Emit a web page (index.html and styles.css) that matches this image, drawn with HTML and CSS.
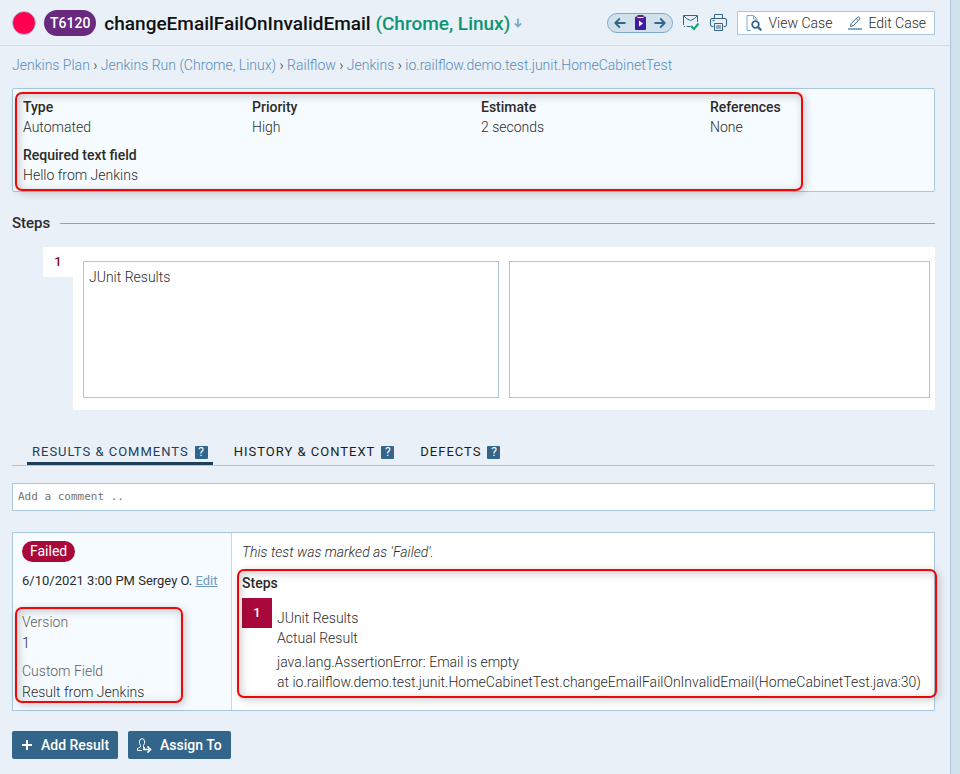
FILE: index.html
```html
<!DOCTYPE html>
<html lang="en">
<head>
<meta charset="utf-8">
<title>T6120 changeEmailFailOnInvalidEmail</title>
<link rel="stylesheet" href="styles.css">
</head>
<body>
<div class="page">
  <header class="header">
    <span class="status-dot"></span>
    <span class="test-id">T6120</span>
    <h1 class="title">changeEmailFailOnInvalidEmail <span class="title-config">(Chrome, Linux)</span></h1>
    <a class="title-arrow" href="#details" aria-label="Jump to details">
      <svg width="8" height="10" viewBox="0 0 8 10"><path d="M4 0.5V8.5M0.8 5.3L4 8.5L7.2 5.3" fill="none" stroke="#7fabcb" stroke-width="1.8"/></svg>
    </a>
    <div class="header-tools">
      <nav class="pager" aria-label="Tests">
        <a href="#prev" aria-label="Previous test"><svg width="12" height="12" viewBox="0 0 12 12"><path d="M11.5 6H1.5M5.8 1.5L1.3 6L5.8 10.5" fill="none" stroke="#33658a" stroke-width="1.8"/></svg></a>
        <a href="#run" aria-label="Run"><svg width="11" height="15" viewBox="0 0 11 15"><path d="M1 1.8H10A1 1 0 0 1 11 2.8V14A1 1 0 0 1 10 15H1A1 1 0 0 1 0 14V2.8A1 1 0 0 1 1 1.8Z" fill="#3d1d9e"/><path d="M0 5V2.8A1 1 0 0 1 1 1.8H2.5V0H8.5V1.8H10A1 1 0 0 1 11 2.8V5Z" fill="#5a2185"/><path d="M2.5 2.5H8.5" stroke="#e9f0f7"/><path d="M4 5.5L8 8.5L4 11.500Z" fill="#fff"/></svg></a>
        <a href="#next" aria-label="Next test"><svg width="12" height="12" viewBox="0 0 12 12"><path d="M0.500 6H10.500M6.200 1.500L10.700 6L6.200 10.500" fill="none" stroke="#33658a" stroke-width="1.8"/></svg></a>
      </nav>
      <a class="tool" href="#subscribe" aria-label="Subscribe"><svg width="17" height="17" viewBox="0 0 17 17"><path d="M7.500 12.500H3.500M0.500 11V1.500H14.500V8M1 12.500H2M1 2L3.500 4.500L7.500 6.500L11.500 4.500L14 2" fill="none" stroke="#33658a"/><path d="M8 12L11 15L15.500 9.500" fill="none" stroke="#12a178" stroke-width="2"/></svg></a>
      <a class="tool" href="#print" aria-label="Print"><svg width="17" height="17" viewBox="0 0 17 17"><path d="M4.500 4V0.500H12.500V4M3.500 12.500H2A1.500 1.500 0 0 1 0.500 11V6A1.500 1.500 0 0 1 2 4.500H15A1.500 1.500 0 0 1 16.500 6V11A1.500 1.500 0 0 1 15 12.500H13.500M4.500 9.500H12.500V16.500H4.500ZM6 12H11M6 14H11" fill="none" stroke="#33658a"/><path d="M2.500 6.500H4.500" stroke="#12a178" stroke-width="1.500"/></svg></a>
      <div class="case-links">
        <a href="#view"><svg width="16" height="16" viewBox="0 0 16 16"><path d="M5 15.500H1V0.500H7.500L11 4V5" fill="none" stroke="#7fabcb"/><path d="M7.500 0.500V4H11" fill="none" stroke="#7fabcb"/><circle cx="9.500" cy="9.500" r="3.300" fill="none" stroke="#33658a" stroke-width="1.800"/><path d="M12 12L15.300 15.300" stroke="#33658a" stroke-width="2.200"/></svg>View Case</a>
        <a href="#edit"><svg width="14" height="14" viewBox="0 0 14 14"><path d="M2.500 10.500L3.200 7.500L9.500 1.200Q10.300 0.500 11.300 1.500Q12.300 2.500 11.500 3.400L5.300 9.700ZM8.300 2.500L10.300 4.600" fill="none" stroke="#33658a"/><path d="M0 13H14" stroke="#7fabcb" stroke-width="2"/></svg>Edit Case</a>
      </div>
    </div>
  </header>

  <main class="content">
    <nav class="breadcrumb" aria-label="Breadcrumb">
      <a href="#plan">Jenkins Plan</a> › <a href="#jrun">Jenkins Run (Chrome, Linux)</a> › <a href="#railflow">Railflow</a> › <a href="#jenkins">Jenkins</a> › <a href="#suite">io.railflow.demo.test.junit.HomeCabinetTest</a>
    </nav>

    <section class="details" id="details">
      <dl class="fields">
        <div><dt>Type</dt><dd>Automated</dd></div>
        <div><dt>Priority</dt><dd>High</dd></div>
        <div><dt>Estimate</dt><dd>2 seconds</dd></div>
        <div><dt>References</dt><dd>None</dd></div>
        <div><dt>Required text field</dt><dd>Hello from Jenkins</dd></div>
      </dl>
      <span class="highlight highlight-details"></span>
    </section>

    <h2 class="section-title">Steps</h2>
    <section class="step">
      <span class="step-number">1</span>
      <div class="step-body">
        <div class="step-panel">JUnit Results</div>
        <div class="step-panel"></div>
      </div>
    </section>

    <nav class="tabs" aria-label="Test sections">
      <a class="tab tab-active" href="#results">Results &amp; Comments <span class="help">?</span></a>
      <a class="tab" href="#history">History &amp; Context <span class="help">?</span></a>
      <a class="tab" href="#defects">Defects <span class="help">?</span></a>
    </nav>

    <input class="comment" type="text" aria-label="Add a comment" placeholder="Add a comment ..">

    <article class="result" id="results">
      <div class="result-meta">
        <span class="badge">Failed</span>
        <p class="author">6/10/2021 3:00 PM Sergey O. <a href="#edit-result">Edit</a></p>
        <dl class="custom">
          <dt>Version</dt><dd>1</dd>
          <dt>Custom Field</dt><dd>Result from Jenkins</dd>
        </dl>
        <span class="highlight highlight-custom"></span>
      </div>
      <div class="result-body">
        <p class="marked">This test was marked as 'Failed'.</p>
        <h3 class="result-heading">Steps</h3>
        <div class="result-step">
          <span class="step-number step-failed">1</span>
          <div class="result-text">
            <p>JUnit Results</p>
            <p>Actual Result</p>
            <p class="trace">java.lang.AssertionError: Email is empty<br>at io.railflow.demo.test.junit.HomeCabinetTest.changeEmailFailOnInvalidEmail(HomeCabinetTest.java:30)</p>
          </div>
        </div>
        <span class="highlight highlight-steps"></span>
      </div>
    </article>

    <div class="actions">
      <button type="button" class="button"><svg width="12" height="12" viewBox="0 0 12 12"><path d="M6 1V11M1 6H11" stroke="#fff" stroke-width="2"/></svg>Add Result</button>
      <button type="button" class="button"><svg width="15" height="15" viewBox="0 0 15 15"><path d="M0.500 12.500V10.500L3.500 9V7.500Q2 5.500 2.500 3Q3 0.700 5 0.700T7.500 3Q8 5.500 6.500 7.500V9M0.500 12.500H5" fill="none" stroke="#fff"/><path d="M7 9V11.500H13M10.500 8.500L13.500 11.500L10.500 14.500" fill="none" stroke="#fff" stroke-width="1.700"/></svg>Assign To</button>
    </div>
  </main>
</div>
</body>
</html>
```
FILE: styles.css
```css
* { box-sizing: border-box; }

body {
  margin: 0;
  background: #d0e1ec;
  color: #2b2b2b;
  font: 300 14px/20px Roboto, "Liberation Sans", sans-serif;
}

h1, h2, h3, p, dl, dd { margin: 0; }
svg { display: block; flex: none; }

.page {
  min-height: 100vh;
  margin-right: 9px;
  border-right: 1px solid #a9c8dd;
  background: #e9f0f7;
}

.header {
  display: flex;
  align-items: center;
  height: 46px;
  padding: 0 15px 0 12px;
  border-bottom: 1px solid #d0e1ec;
  white-space: nowrap;
}
.status-dot {
  width: 24px;
  height: 24px;
  border: 1px solid #a9c8dd;
  border-radius: 50%;
  background: #ff0050;
}
.test-id {
  margin: 0 8px;
  padding: 0 6px;
  border-radius: 13px;
  background: #68297f;
  color: #fff;
  font-weight: 500;
  line-height: 26px;
}
.title {
  padding-top: 2px;
  color: #111;
  font-size: 19px;
  font-weight: 500;
  line-height: 26px;
}
.title-config { color: #0e9472; }
.title-arrow { margin-left: 4px; }

.header-tools {
  display: flex;
  align-items: center;
  gap: 10px;
  margin-left: auto;
}
.pager {
  display: flex;
  align-items: center;
  justify-content: space-between;
  width: 66px;
  height: 20px;
  padding: 0 6px;
  border: 1px solid #7fabcb;
  border-radius: 10px;
  background: #d0e1ec;
}
.case-links {
  display: flex;
  align-items: center;
  gap: 16px;
  height: 24px;
  padding: 0 8px;
  border: 1px solid #a9c8dd;
  background: #fff;
}
.case-links a {
  display: flex;
  align-items: center;
  gap: 6px;
  color: #2b2b2b;
  text-decoration: none;
}

.content { padding: 9px 15px 14px 12px; }

.breadcrumb a { color: #5a8cba; text-decoration: none; }

.details {
  position: relative;
  margin-top: 13px;
  border: 1px solid #a9c8dd;
  border-radius: 2px;
  background: #f6fbff;
}
.fields {
  display: grid;
  grid-template-columns: repeat(4, 1fr);
  row-gap: 8px;
  padding: 8px 5px 6px 0;
}
.fields > div { padding-left: 10px; }
.fields dt { font-weight: 500; }

.highlight {
  position: absolute;
  border: 2px solid #f00808;
  border-radius: 7px;
  box-shadow: 2px 2px 8px rgba(0, 0, 0, .2), inset 2px 2px 10px rgba(0, 0, 0, .2);
  pointer-events: none;
}
.highlight-details { inset: 3px 131px 0 2px; }
.highlight-custom { inset: 74px 48px 7px 2px; }
.highlight-steps { inset: 36px -3px 12px 5px; }

.section-title {
  display: flex;
  align-items: center;
  gap: 10px;
  margin-top: 21px;
  font-size: 15px;
  font-weight: 500;
}
.section-title::after {
  content: "";
  flex: 1;
  border-top: 1px solid #7fa8c9;
}

.step {
  display: flex;
  align-items: flex-start;
  margin: 14px 0 0 31px;
}
.step-number {
  flex: none;
  width: 30px;
  background: #fff;
  color: #840a33;
  font-size: 13px;
  font-weight: 500;
  line-height: 30px;
  text-align: center;
}
.step-body {
  flex: 1;
  display: grid;
  grid-template-columns: 416fr 421fr;
  gap: 10px;
  padding: 14px 5px 12px 10px;
  background: #fff;
}
.step-panel {
  min-height: 137px;
  padding: 5px;
  border: 1px solid #a9c8dd;
}

.tabs {
  display: flex;
  gap: 16px;
  margin-top: 28px;
  padding-left: 15px;
  border-bottom: 1px solid #a9c8dd;
}
.tab {
  display: flex;
  align-items: center;
  gap: 6px;
  padding: 4px 5px 0;
  border-bottom: 3px solid transparent;
  color: #1c1c1c;
  font-size: 13px;
  font-weight: 400;
  letter-spacing: 1px;
  text-decoration: none;
  text-transform: uppercase;
}
.tab-active { border-color: #1d3f5c; color: #1d3f5c; }
.help {
  width: 13px;
  border-radius: 1px;
  background: #33658a;
  color: #fff;
  font-size: 12px;
  letter-spacing: 0;
  line-height: 13px;
  text-align: center;
}

.comment {
  display: block;
  width: 100%;
  height: 28px;
  margin-top: 17px;
  padding: 0 5px 2px;
  border: 1px solid #a9c8dd;
  border-radius: 0;
  background: #fff;
  font: 11px "DejaVu Sans Mono", monospace;
}
.comment::placeholder { color: #757575; opacity: 1; }

.result {
  display: grid;
  grid-template-columns: 219px 1fr;
  margin-top: 21px;
  border: 1px solid #a9c8dd;
  background: #fff;
}
.result-meta {
  position: relative;
  padding: 8px 9px;
  border-right: 1px solid #c5dae8;
  background: #f6fbff;
}
.badge {
  display: inline-block;
  padding: 0 8px;
  border-radius: 11px;
  background: #a9093a;
  color: #fff;
  font-weight: 400;
  line-height: 21px;
}
.author { margin-top: 9px; font-size: 13px; font-weight: 400; white-space: nowrap; }
.author a { color: #6c9ac3; }
.custom { margin-top: 20px; }
.custom dt { color: #606060; line-height: 22px; }
.custom dd { line-height: 20px; }
.custom dd + dt { margin-top: 7px; }

.result-body {
  position: relative;
  min-width: 0;
  padding: 9px 10px 18px;
}
.marked { font-style: italic; }
.result-heading {
  margin-top: 11px;
  font-size: 14px;
  font-weight: 500;
}
.result-step {
  display: flex;
  align-items: flex-start;
  gap: 5px;
  margin-top: 5px;
}
.step-failed { background: #a9093a; color: #fff; }
.result-text { padding-top: 10px; white-space: nowrap; }
.trace { margin-top: 4px; }

.actions { display: flex; gap: 10px; margin-top: 20px; }
.button {
  display: flex;
  align-items: center;
  gap: 8px;
  height: 28px;
  padding: 0 9px;
  border: 0;
  border-radius: 2px;
  background: #33658a;
  color: #fff;
  font: 500 14px/20px Roboto, "Liberation Sans", sans-serif;
}
```
